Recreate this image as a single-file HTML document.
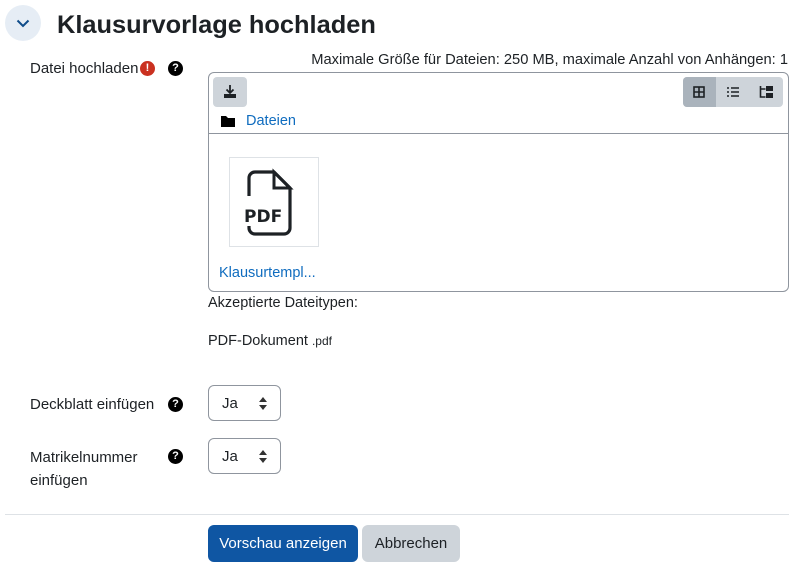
<!DOCTYPE html>
<html><head><meta charset="utf-8"><style>
*{box-sizing:border-box;margin:0;padding:0}
body{width:797px;height:565px;background:#fff;font-family:"Liberation Sans",sans-serif;color:#1d2125;font-size:15px;position:relative;overflow:hidden}
.a{position:absolute;white-space:nowrap}
.q{position:absolute;width:15px;height:15px;border-radius:50%;background:#000;color:#fff;font-size:11px;font-weight:bold;text-align:center;line-height:15px}
.sel{position:absolute;left:208px;width:73px;height:36px;border:1px solid #8f959e;border-radius:6px;font-size:15px;padding:9px 0 0 13px}
.sel:after{content:"";position:absolute;right:13px;top:11px;border:4px solid transparent;border-bottom:5px solid #333;border-top:0}
.sel:before{content:"";position:absolute;right:13px;top:19px;border:4px solid transparent;border-top:5px solid #333;border-bottom:0}
.blue{color:#0f6cbf}
</style></head><body>
<div class="a" style="left:5px;top:5px;width:36px;height:36px;border-radius:50%;background:#e6edf5"></div>
<svg class="a" style="left:15px;top:15px" width="16" height="16" viewBox="0 0 16 16"><path d="M2.5 5.5l5.5 5.5 5.5-5.5" fill="none" stroke="#0f4c8a" stroke-width="2"/></svg>
<div class="a" style="left:57px;top:8px;font-size:25.4px;font-weight:bold;line-height:34px">Klausurvorlage hochladen</div>

<div class="a" style="left:30px;top:60px">Datei hochladen</div>
<div class="q" style="left:140px;top:61px;background:#ca3120">!</div>
<div class="q" style="left:168px;top:61px">?</div>
<div class="a" style="right:9px;top:52px;font-size:14.7px">Maximale Größe für Dateien: 250 MB, maximale Anzahl von Anhängen: 1</div>

<div class="a" style="left:208px;top:72px;width:581px;height:220px;border:1px solid #8f959e;border-radius:6px"></div>
<div class="a" style="left:213px;top:77px;width:34px;height:30px;background:#ced4da;border-radius:4px"></div>
<svg class="a" style="left:222px;top:84px" width="16" height="16" viewBox="0 0 16 16"><path d="M8 1v8M4.5 5.5L8 9l3.5-3.5" fill="none" stroke="#1d2125" stroke-width="1.8"/><path d="M2 10v4h12v-4" fill="#1d2125"/></svg>
<div class="a" style="left:683px;top:77px;width:100px;height:30px;background:#ced4da;border-radius:4px;overflow:hidden"><div style="width:33px;height:30px;background:#aab3bc"></div></div>
<svg class="a" style="left:693px;top:86px" width="12" height="12" viewBox="0 0 12 12"><rect x="1" y="1" width="10" height="10" fill="none" stroke="#1d2125" stroke-width="1.6"/><path d="M6 1v10M1 6h10" stroke="#1d2125" stroke-width="1.6"/></svg>
<svg class="a" style="left:726px;top:86px" width="13" height="12" viewBox="0 0 13 12"><path d="M1 2h2M5 2h8M1 6h2M5 6h8M1 10h2M5 10h8" stroke="#1d2125" stroke-width="1.6"/></svg>
<svg class="a" style="left:759px;top:85px" width="15" height="14" viewBox="0 0 15 14"><path d="M1.5 1v11h5M1.5 4h5" fill="none" stroke="#1d2125" stroke-width="1.6"/><rect x="7" y="1" width="7" height="5" fill="#1d2125"/><rect x="7" y="8" width="7" height="5" fill="#1d2125"/></svg>
<svg class="a" style="left:221px;top:115px" width="14" height="12" viewBox="0 0 14 12"><path d="M0 1h5l2 2h7v9H0z" fill="#000"/></svg>
<div class="a blue" style="left:246px;top:113px;font-size:14.5px">Dateien</div>
<div class="a" style="left:209px;top:133px;width:579px;height:1px;background:#8f959e"></div>
<div class="a" style="left:229px;top:157px;width:90px;height:90px;border:1px solid #dee2e6"></div>
<svg class="a" style="left:244px;top:168px" width="60" height="68" viewBox="0 0 60 68"><path d="M5 28V10a6 6 0 0 1 6-6h19l16 16v40a6 6 0 0 1-6 6H11a6 6 0 0 1-6-6v-2" fill="none" stroke="#1d2125" stroke-width="3.2" stroke-linejoin="round"/><path d="M30 4v16h16z" fill="none" stroke="#1d2125" stroke-width="3"/><text x="0" y="54" font-family="DejaVu Sans" font-weight="bold" font-size="17" fill="#1d2125">PDF</text></svg>
<div class="a blue" style="left:219px;top:265px;font-size:14.5px">Klausurtempl...</div>

<div class="a" style="left:208px;top:295px;font-size:14.5px">Akzeptierte Dateitypen:</div>
<div class="a" style="left:208px;top:333px;font-size:14.5px">PDF-Dokument <span style="font-size:12px">.pdf</span></div>

<div class="a" style="left:30px;top:396px">Deckblatt einfügen</div>
<div class="q" style="left:168px;top:397px">?</div>
<div class="sel" style="top:385px">Ja</div>

<div class="a" style="left:30px;top:446px;line-height:23px;white-space:normal">Matrikelnummer<br>einfügen</div>
<div class="q" style="left:168px;top:449px">?</div>
<div class="sel" style="top:438px">Ja</div>

<div class="a" style="left:5px;top:514px;width:784px;height:1px;background:#dee2e6"></div>
<div class="a" style="left:208px;top:525px;width:150px;height:37px;background:#0f56a3;border-radius:6px;color:#fff;text-align:center;line-height:37px">Vorschau anzeigen</div>
<div class="a" style="left:362px;top:525px;width:98px;height:37px;background:#ced4da;border-radius:6px;text-align:center;line-height:37px">Abbrechen</div>
</body></html>
